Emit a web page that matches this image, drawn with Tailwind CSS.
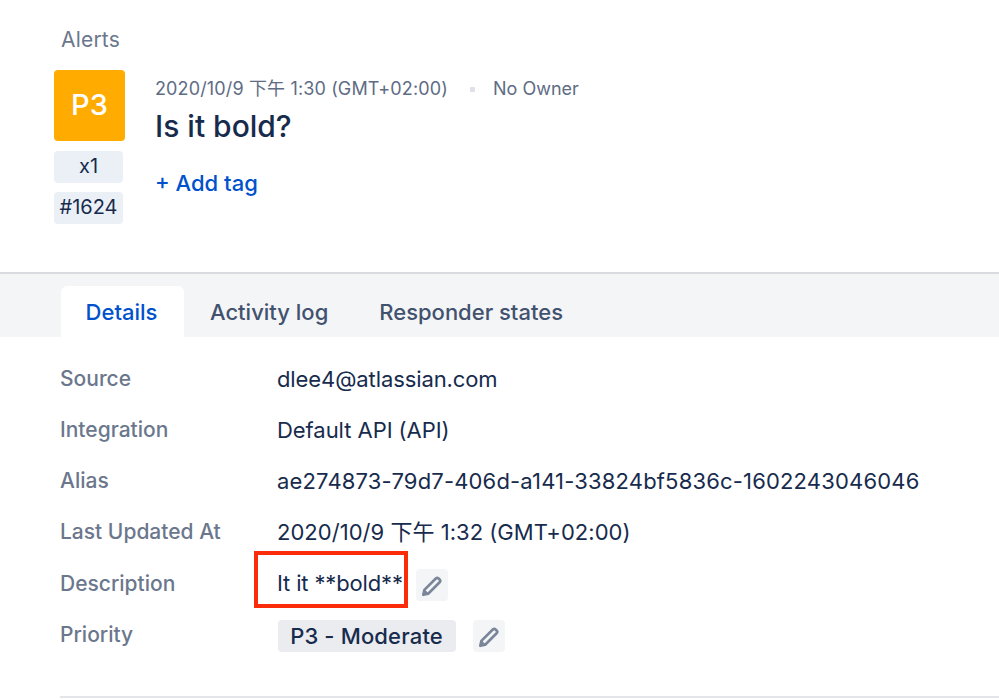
<!DOCTYPE html>
<html lang="en">
<head>
  <meta charset="UTF-8" />
  <title>Alert detail</title>
  <script src="https://cdn.jsdelivr.net/npm/@tailwindcss/browser@4"></script>
</head>
<body class="bg-white h-[699px] overflow-hidden font-['Inter','Noto_Sans_CJK_SC',sans-serif] text-[#172b4d]">
  <!-- header -->
  <div class="h-[272px] pl-[54px] pt-[27px]">
    <p class="pl-[7px] text-[21px] leading-[25px] tracking-[0.2px] text-[#6b778c]">Alerts</p>
    <div class="flex mt-[18px]">
      <div class="w-[71px]">
        <div class="h-[71px] pb-[2px] rounded-[4px] bg-[#ffab00] text-white text-[29px] font-medium flex items-center justify-center">P3</div>
        <div class="w-[69px] h-[32px] pb-[2px] mt-[10px] rounded-[4px] bg-[#ebf0f7] text-[20px] flex items-center justify-center">x1</div>
        <div class="w-[69px] h-[32px] pb-[2px] mt-[9px] rounded-[4px] bg-[#ebf0f7] text-[20px] flex items-center justify-center">#1624</div>
      </div>
      <div class="pl-[30px]">
        <div class="flex items-center mt-[8px] text-[18px] leading-[22px] text-[#5e6c84]">
          <span class="tracking-[0.14px]">2020/10/9 下午 1:30 (GMT+02:00)</span>
          <span class="w-[5px] h-[5px] ml-[22px] mr-[18px] rounded-[1px] bg-[#dfe1e6]"></span>
          <span>No Owner</span>
        </div>
        <h1 class="text-[30px] leading-[38px] font-medium mt-[7px]">Is it bold?</h1>
        <button class="block mt-[24px] text-[22px] leading-[28px] font-medium text-[#0052cc]">+ Add tag</button>
      </div>
    </div>
  </div>

  <!-- tabs -->
  <div class="h-[65px] border-t-2 border-[#d8dadf] bg-[#f4f5f7] flex items-end pl-[61px] text-[22px] font-medium text-[#42526e]">
    <div class="w-[123px] h-[51px] pt-[2px] pr-[2px] rounded-t-[6px] bg-white text-[#0052cc] flex items-center justify-center">Details</div>
    <div class="h-[51px] pt-[2px] flex items-center ml-[26px]">Activity log</div>
    <div class="h-[51px] pt-[2px] flex items-center ml-[51px]">Responder states</div>
  </div>

  <!-- fields -->
  <div class="ml-[60px] mt-[16px] grid grid-cols-[217px_1fr] auto-rows-[51px] text-[22px]">
    <div class="text-[21px] font-[450] leading-[52px] text-[#6b778c]">Source</div>
    <div class="leading-[52px] tracking-[-0.1px]">dlee4@atlassian.com</div>
    <div class="text-[21px] font-[450] leading-[52px] text-[#6b778c]">Integration</div>
    <div class="leading-[52px] tracking-[-0.05px]">Default API (API)</div>
    <div class="text-[21px] font-[450] leading-[52px] text-[#6b778c]">Alias</div>
    <div class="leading-[52px] tracking-[0.17px]">ae274873-79d7-406d-a141-33824bf5836c-1602243046046</div>
    <div class="text-[21px] font-[450] leading-[52px] text-[#6b778c]">Last Updated At</div>
    <div class="leading-[52px] tracking-[0.03px]">2020/10/9 下午 1:32 (GMT+02:00)</div>
    <div class="text-[21px] font-[450] leading-[54px] text-[#6b778c]">Description</div>
    <div class="flex items-center pt-[2px]">
      <span class="relative tracking-[-0.15px]">It it **bold**
        <span class="absolute left-[-23px] top-[-16px] w-[154px] h-[57px] border-[4px] border-[#fb2c0a]"></span>
      </span>
      <button class="ml-[13px] mt-[2px] w-[32px] h-[32px] rounded-[4px] bg-[#f4f5f7] flex items-center justify-center">
        <svg class="w-[24px] h-[24px]" viewBox="0 0 22 22" fill="none" stroke="#7a869a" stroke-width="2.4" stroke-linejoin="round"><path d="M4 15.5 14.5 5a1.8 1.8 0 0 1 2.5 0l1 1a1.8 1.8 0 0 1 0 2.5L7.5 19 3 20z"/><path d="M3 20l1-4.5 3.5 3.5z" fill="#7a869a" stroke-width="1"/></svg>
      </button>
    </div>
    <div class="text-[21px] font-[450] leading-[54px] text-[#6b778c]">Priority</div>
    <div class="flex items-center pt-[5px] pl-px">
      <span class="h-[32px] w-[178px] pr-[1px] rounded-[4px] bg-[#ebecf0] font-medium tracking-[0.15px] flex items-center justify-center">P3 - Moderate</span>
      <button class="ml-[17px] w-[32px] h-[32px] rounded-[4px] bg-[#f4f5f7] flex items-center justify-center">
        <svg class="w-[24px] h-[24px]" viewBox="0 0 22 22" fill="none" stroke="#7a869a" stroke-width="2.4" stroke-linejoin="round"><path d="M4 15.5 14.5 5a1.8 1.8 0 0 1 2.5 0l1 1a1.8 1.8 0 0 1 0 2.5L7.5 19 3 20z"/><path d="M3 20l1-4.5 3.5 3.5z" fill="#7a869a" stroke-width="1"/></svg>
      </button>
    </div>
  </div>
  <div class="ml-[60px] mt-[37px] h-[2px] bg-[#e4e5e9]"></div>
</body>
</html>
